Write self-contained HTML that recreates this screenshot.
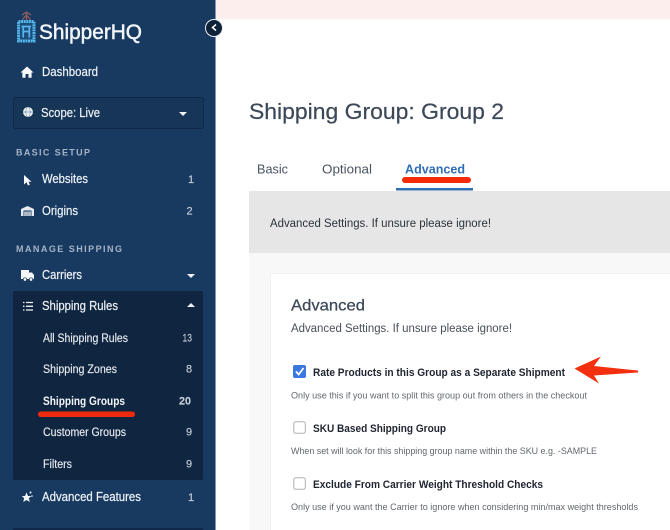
<!DOCTYPE html>
<html><head><meta charset="utf-8"><style>
html,body{margin:0;padding:0;background:#fff;width:670px;height:530px;overflow:hidden}
svg{display:block;filter:blur(.35px)}
text{font-family:"Liberation Sans",sans-serif}
.n{fill:#eef2f6;font-size:12.5px;stroke:#eef2f6;stroke-width:.2px}
.c{fill:#c3ced9;font-size:11px;stroke:#c3ced9;stroke-width:.15px}
.h{fill:#a5b3c5;font-size:9px;font-weight:bold}
.s{fill:#e6ebf1;font-size:11.500px;stroke:#e6ebf1;stroke-width:.15px}
.l{fill:#1f2530;font-size:11px;font-weight:bold}
.p{fill:#62676d;font-size:9.500px}
</style></head><body>
<svg width="670" height="530" viewBox="0 0 670 530" xmlns="http://www.w3.org/2000/svg">
<rect width="670" height="530" fill="#fff"/>
<rect x="216" y="0" width="454" height="19" fill="#fdeeee"/>
<rect x="0" y="0" width="215" height="530" fill="#183a61"/>
<rect x="215" y="0" width="1" height="530" fill="#7f97b2"/>

<!-- logo -->
<g fill="none" stroke="#8f5f5f" stroke-width="1.300"><path d="M26.500 12V20M22 15l4.500-3 4.500 3M22.500 19.500l4-4.500 4 4.500"/></g>
<rect x="18.500" y="21.500" width="15.500" height="19.500" fill="#1d4d7a" stroke="#55b8ec" stroke-width="3" stroke-dasharray="2 .6"/>
<path d="M21.500 26.500H31M23.200 26.500V37.500M29.300 26.500V37.500M23.200 31.500H29.300" fill="none" stroke="#55b8ec" stroke-width="1.700"/>
<text x="39" y="39" font-size="21" fill="#f2f6fa" stroke="#f2f6fa" stroke-width=".45" textLength="103" lengthAdjust="spacingAndGlyphs">ShipperHQ</text>

<!-- collapse -->
<circle cx="214" cy="28" r="8.500" fill="#0e2239" stroke="#e8eef4" stroke-width="1"/>
<path d="M216 24.500L212.500 27.500L216 30.500" fill="none" stroke="#fff" stroke-width="1.500"/>

<!-- dashboard -->
<path d="M20.500 72.500L27 66.500L33.500 72.500H31.600V77.800H28.500V74H25.500V77.800H22.400V72.500Z" fill="#f6f8fa"/>
<text class="n" x="42" y="76" textLength="56" lengthAdjust="spacingAndGlyphs">Dashboard</text>

<!-- scope -->
<rect x="13.500" y="97.500" width="190" height="31" rx="2" fill="#163557" stroke="#10294a"/>
<circle cx="28" cy="112" r="5" fill="#eef2f6"/>
<path d="M23 112H33" stroke="#5e7690" stroke-width=".6"/>
<ellipse cx="28" cy="112" rx="2.200" ry="5" fill="none" stroke="#5e7690" stroke-width=".5"/>
<text class="n" x="41" y="117" textLength="59" lengthAdjust="spacingAndGlyphs">Scope: Live</text>
<path d="M179 112H187L183 116Z" fill="#eef2f6"/>

<!-- basic setup -->
<text class="h" x="16" y="155.500" textLength="74" lengthAdjust="spacing">BASIC SETUP</text>
<path d="M24 175V184.500L26.500 182.300L28 185.500L29.800 184.700L28.500 181.700H31.500Z" fill="#f6f8fa"/>
<text class="n" x="42" y="183" textLength="46" lengthAdjust="spacingAndGlyphs">Websites</text>
<text class="c" x="188" y="183">1</text>
<path d="M21 216V209L27.500 206L34 209V216H31.500V210.500H23.500V216Z" fill="#e6ebf1"/>
<rect x="24" y="211.500" width="7" height="4.500" fill="#aab7c5"/>
<text class="n" x="42" y="215" textLength="36" lengthAdjust="spacingAndGlyphs">Origins</text>
<text class="c" x="186.500" y="214.500">2</text>

<!-- manage shipping -->
<text class="h" x="16" y="252" textLength="106" lengthAdjust="spacing">MANAGE SHIPPING</text>
<path d="M21 270H29V272.500H32L34 275V279H21Z" fill="#f4f6f9"/>
<circle cx="25" cy="279.500" r="1.700" fill="#f4f6f9" stroke="#183a61" stroke-width=".7"/>
<circle cx="31" cy="279.500" r="1.700" fill="#f4f6f9" stroke="#183a61" stroke-width=".7"/>
<text class="n" x="42" y="279" textLength="40" lengthAdjust="spacingAndGlyphs">Carriers</text>
<path d="M187 274H195L191 278Z" fill="#eef2f6"/>

<!-- shipping rules -->
<rect x="13" y="291" width="190" height="189" rx="2" fill="#10253f"/>
<path d="M26 302.500H33M26 306.300H33M26 310H33" stroke="#eef2f6" stroke-width="1.300"/>
<path d="M23 302.500H24.500M23 306.300H24.500M23 310H24.500" stroke="#eef2f6" stroke-width="1.300"/>
<text class="n" x="42" y="310" textLength="76" lengthAdjust="spacingAndGlyphs">Shipping Rules</text>
<path d="M187 307H195L191 303Z" fill="#eef2f6"/>

<text class="s" x="43" y="342" textLength="85" lengthAdjust="spacingAndGlyphs">All Shipping Rules</text>
<text class="c" x="182.500" y="341.500" textLength="9.500" lengthAdjust="spacingAndGlyphs">13</text>
<text class="s" x="43" y="373" textLength="74" lengthAdjust="spacingAndGlyphs">Shipping Zones</text>
<text class="c" x="186" y="372.500">8</text>
<text x="43" y="405" font-size="11.500" font-weight="bold" fill="#f4f6f9" textLength="82" lengthAdjust="spacingAndGlyphs">Shipping Groups</text>
<text class="c" x="179" y="404.500" font-weight="bold" textLength="12" lengthAdjust="spacingAndGlyphs">20</text>
<rect x="38" y="411.500" width="97" height="5.500" rx="2.700" fill="#f02a0c"/>
<text class="s" x="43" y="436" textLength="83" lengthAdjust="spacingAndGlyphs">Customer Groups</text>
<text class="c" x="186" y="435.500">9</text>
<text class="s" x="43" y="468" textLength="29" lengthAdjust="spacingAndGlyphs">Filters</text>
<text class="c" x="186" y="467.500">9</text>

<!-- advanced features -->
<path d="M26.500 492.500L28 496H31.500L28.800 498.300L29.800 502L26.500 500L23.200 502L24.200 498.300L21.800 496H25Z" fill="#f4f6f9"/>
<circle cx="30.500" cy="492.500" r="1" fill="#f4f6f9"/><circle cx="32" cy="496" r=".8" fill="#f4f6f9"/>
<text class="n" x="42" y="501" textLength="99" lengthAdjust="spacingAndGlyphs">Advanced Features</text>
<text class="c" x="188" y="501">1</text>
<rect x="13" y="528" width="190" height="2" fill="#10294a"/>

<!-- main -->
<text x="249" y="119" font-size="22" fill="#3c4858" stroke="#3c4858" stroke-width=".2" textLength="255" lengthAdjust="spacingAndGlyphs">Shipping Group: Group 2</text>
<text x="257" y="173.500" font-size="12.500" fill="#4a5461" textLength="31" lengthAdjust="spacingAndGlyphs">Basic</text>
<text x="322" y="173.500" font-size="12.500" fill="#4a5461" textLength="50" lengthAdjust="spacingAndGlyphs">Optional</text>
<text x="405" y="173.500" font-size="12.500" font-weight="bold" fill="#2f6db5" textLength="60" lengthAdjust="spacingAndGlyphs">Advanced</text>
<rect x="402" y="177" width="69" height="6" rx="3" fill="#f42a08"/>
<rect x="396" y="188" width="77" height="2.500" fill="#2f6db5"/>

<rect x="249" y="191" width="421" height="62" fill="#e6e6e6"/>
<text x="270" y="227" font-size="11.500" fill="#2c323a" textLength="221" lengthAdjust="spacingAndGlyphs">Advanced Settings. If unsure please ignore!</text>
<rect x="249" y="253" width="421" height="277" fill="#f8f8f8"/>
<rect x="271" y="274" width="399" height="256" fill="#fff"/>
<path d="M270.500 530V273.500H670" fill="none" stroke="#f1f1f1"/>

<text x="291" y="310.500" font-size="16" fill="#3c4858" stroke="#3c4858" stroke-width=".25" textLength="74" lengthAdjust="spacingAndGlyphs">Advanced</text>
<text x="291" y="332" font-size="11.500" fill="#4a5058" textLength="221" lengthAdjust="spacingAndGlyphs">Advanced Settings. If unsure please ignore!</text>

<rect x="293" y="365" width="13" height="13" rx="2" fill="#3a78e0"/>
<path d="M296 371.500L298.700 374.500L303.500 368" fill="none" stroke="#fff" stroke-width="1.800"/>
<text class="l" x="313" y="376" textLength="252" lengthAdjust="spacingAndGlyphs">Rate Products in this Group as a Separate Shipment</text>
<path d="M574.500 368.500L601 356.500L594 366L638 370.500V372.500L594 375.500L599 383.500Z" fill="#f2300f"/>
<text class="p" x="291" y="398.500" textLength="296" lengthAdjust="spacingAndGlyphs">Only use this if you want to split this group out from others in the checkout</text>

<rect x="293.800" y="421.800" width="11.500" height="11.500" rx="2" fill="#fff" stroke="#b0b0b0" stroke-width="1"/>
<text class="l" x="313" y="432" textLength="133" lengthAdjust="spacingAndGlyphs">SKU Based Shipping Group</text>
<text class="p" x="291" y="454" textLength="306" lengthAdjust="spacingAndGlyphs">When set will look for this shipping group name within the SKU e.g. -SAMPLE</text>

<rect x="293.800" y="477.800" width="11.500" height="11.500" rx="2" fill="#fff" stroke="#b0b0b0" stroke-width="1"/>
<text class="l" x="313" y="488" textLength="230" lengthAdjust="spacingAndGlyphs">Exclude From Carrier Weight Threshold Checks</text>
<text class="p" x="291" y="510" textLength="347" lengthAdjust="spacingAndGlyphs">Only use if you want the Carrier to ignore when considering min/max weight thresholds</text>
</svg>
</body></html>
